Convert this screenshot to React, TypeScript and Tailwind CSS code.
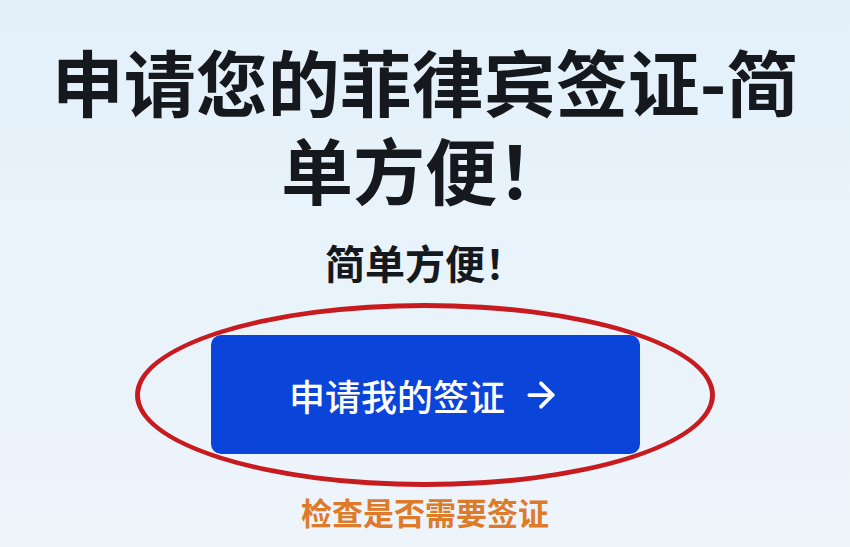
import { ArrowRight } from 'lucide-react';

const cjk = "font-['Noto_Sans_CJK_SC','Noto_Sans',sans-serif]";

export default function App() {
  return (
    <div
      className={`${cjk} flex h-[547px] w-[850px] flex-col items-center overflow-hidden bg-gradient-to-b from-[#e3f0fa] via-[#e9f3fa] to-[#eef4fa] pt-[36px]`}
    >
      <h1 className="w-[780px] text-center text-[72px] font-bold leading-[88px] text-[#15181c]">
        申请您的菲律宾签证-简单方便！
      </h1>

      <p className="mt-[26px] text-[40px] font-bold leading-[48px] text-[#15181c]">简单方便！</p>

      <div className="relative mt-[49px]">
        {/* 红色圈 */}
        <span className="pointer-events-none absolute left-1/2 top-1/2 h-[184px] w-[580px] -translate-x-1/2 -translate-y-1/2 rounded-[50%] border-[5px] border-[#c71b20]" />
        <button className="flex h-[119px] w-[429px] items-center justify-center gap-4 rounded-[10px] bg-[#0a44d8] text-[36px] font-medium text-white">
          <span>申请我的签证</span>
          <ArrowRight className="h-10 w-10" strokeWidth={2.25} />
        </button>
      </div>

      <p className="mt-[40px] text-[31px] font-bold leading-[36px] text-[#de7b2b]">检查是否需要签证</p>
    </div>
  );
}
